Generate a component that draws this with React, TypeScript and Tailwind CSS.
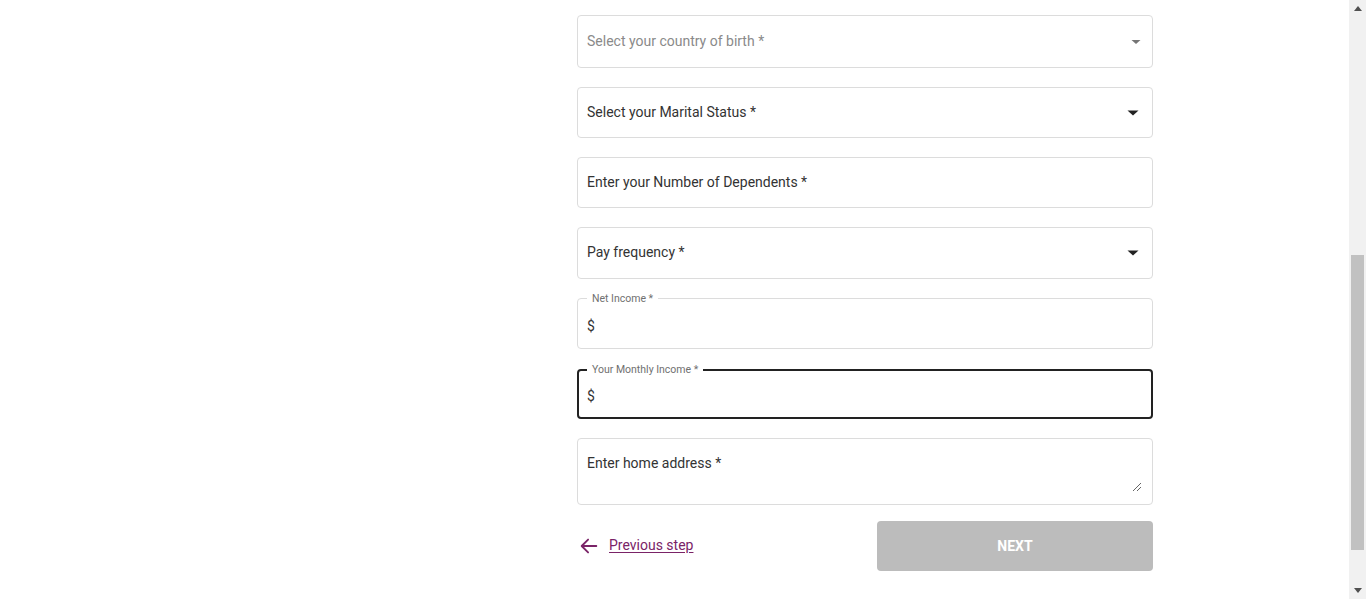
import React from "react";

const Caret = ({ light }: { light?: boolean }) => (
  <svg width="12" height="12" viewBox="0 0 12 12" className="shrink-0">
    {light ? (
      <path d="M1.5 4 L10.5 4 L6 8 Z" fill="#757575" />
    ) : (
      <path d="M0.5 3.5 L11.5 3.5 L6 8.5 Z" fill="#222" />
    )}
  </svg>
);

function Box({
  children,
  className = "",
}: {
  children: React.ReactNode;
  className?: string;
}) {
  return (
    <div
      className={`relative flex items-center rounded-[4px] border border-[#dcdcdc] bg-white px-[9px] ${className}`}
    >
      {children}
    </div>
  );
}

export default function App() {
  return (
    <div
      className="flex h-[599px] w-[1366px] overflow-hidden bg-white text-[14px] text-[#333333]"
      style={{ fontFamily: "Roboto, 'Liberation Sans', sans-serif" }}
    >
      <div className="flex-1">
        <div className="ml-[577px] w-[576px] pt-[15px]">
          <Box className="h-[53px] justify-between pr-[10px]">
            <span className="text-[#8a8a8a]">Select your country of birth *</span>
            <Caret light />
          </Box>
          <Box className="mt-[19px] h-[51px] justify-between pr-[13px]">
            <span>Select your Marital Status *</span>
            <Caret />
          </Box>
          <Box className="mt-[19px] h-[51px]">
            <span>Enter your Number of Dependents *</span>
          </Box>
          <Box className="mt-[19px] h-[52px] justify-between pr-[13px]">
            <span className="-mt-[1px]">Pay frequency *</span>
            <Caret />
          </Box>
          <div className="relative mt-[19px] h-[51px]">
            <fieldset className="absolute inset-x-0 bottom-0 top-[-5px] m-0 rounded-[4px] border border-[#dcdcdc] px-[9px] pt-0">
              <legend className="px-[5px] text-[10.5px] leading-[11px] text-[#707070]">
                Net Income *
              </legend>
            </fieldset>
            <div className="absolute left-[10px] top-[18px] text-[14px]">$</div>
          </div>
          <div className="relative mt-[20px] h-[50px]">
            <fieldset className="absolute inset-x-0 bottom-0 top-[-5px] m-0 rounded-[4px] border-2 border-[#222] px-[8px] pt-0">
              <legend className="px-[5px] text-[10.5px] leading-[11px] text-[#707070]">
                Your Monthly Income *
              </legend>
            </fieldset>
            <div className="absolute left-[10px] top-[17px] text-[14px]">$</div>
          </div>
          <div className="relative mt-[19px] h-[67px] rounded-[4px] border border-[#dcdcdc] bg-white px-[9px] pt-[14px]">
            <span>Enter home address *</span>
            <svg
              width="10"
              height="10"
              viewBox="0 0 10 10"
              className="absolute bottom-[12px] right-[10px]"
            >
              <path d="M9 1 L1 9 M9 5 L5 9" stroke="#666" strokeWidth="1" />
            </svg>
          </div>
          <div className="mt-[16px] flex h-[50px] items-center justify-between">
            <div className="flex items-center pl-[1px] text-[#7a2367]">
              <svg width="22" height="22" viewBox="0 0 24 24" fill="none">
                <path
                  d="M20 12H5M11 5l-7 7 7 7"
                  stroke="#7a2367"
                  strokeWidth="2"
                  strokeLinecap="round"
                  strokeLinejoin="round"
                />
              </svg>
              <span className="ml-[9px] -mt-[1px] underline underline-offset-2">Previous step</span>
            </div>
            <button className="h-[50px] w-[276px] rounded-[4px] bg-[#bcbcbc] text-[14px] font-bold text-white">
              NEXT
            </button>
          </div>
        </div>
      </div>
      <div className="relative flex h-full w-[17px] flex-col bg-[#f1f1f1]">
        <div className="flex h-[17px] items-center justify-center">
          <svg width="8" height="5" viewBox="0 0 8 5">
            <path d="M0 5 L4 0 L8 5 Z" fill="#505050" />
          </svg>
        </div>
        <div className="mx-[2px] mt-[238px] h-[295px] bg-[#c1c1c1]" />
        <div className="mt-auto flex h-[17px] items-center justify-center">
          <svg width="8" height="5" viewBox="0 0 8 5">
            <path d="M0 0 L8 0 L4 5 Z" fill="#505050" />
          </svg>
        </div>
      </div>
    </div>
  );
}
